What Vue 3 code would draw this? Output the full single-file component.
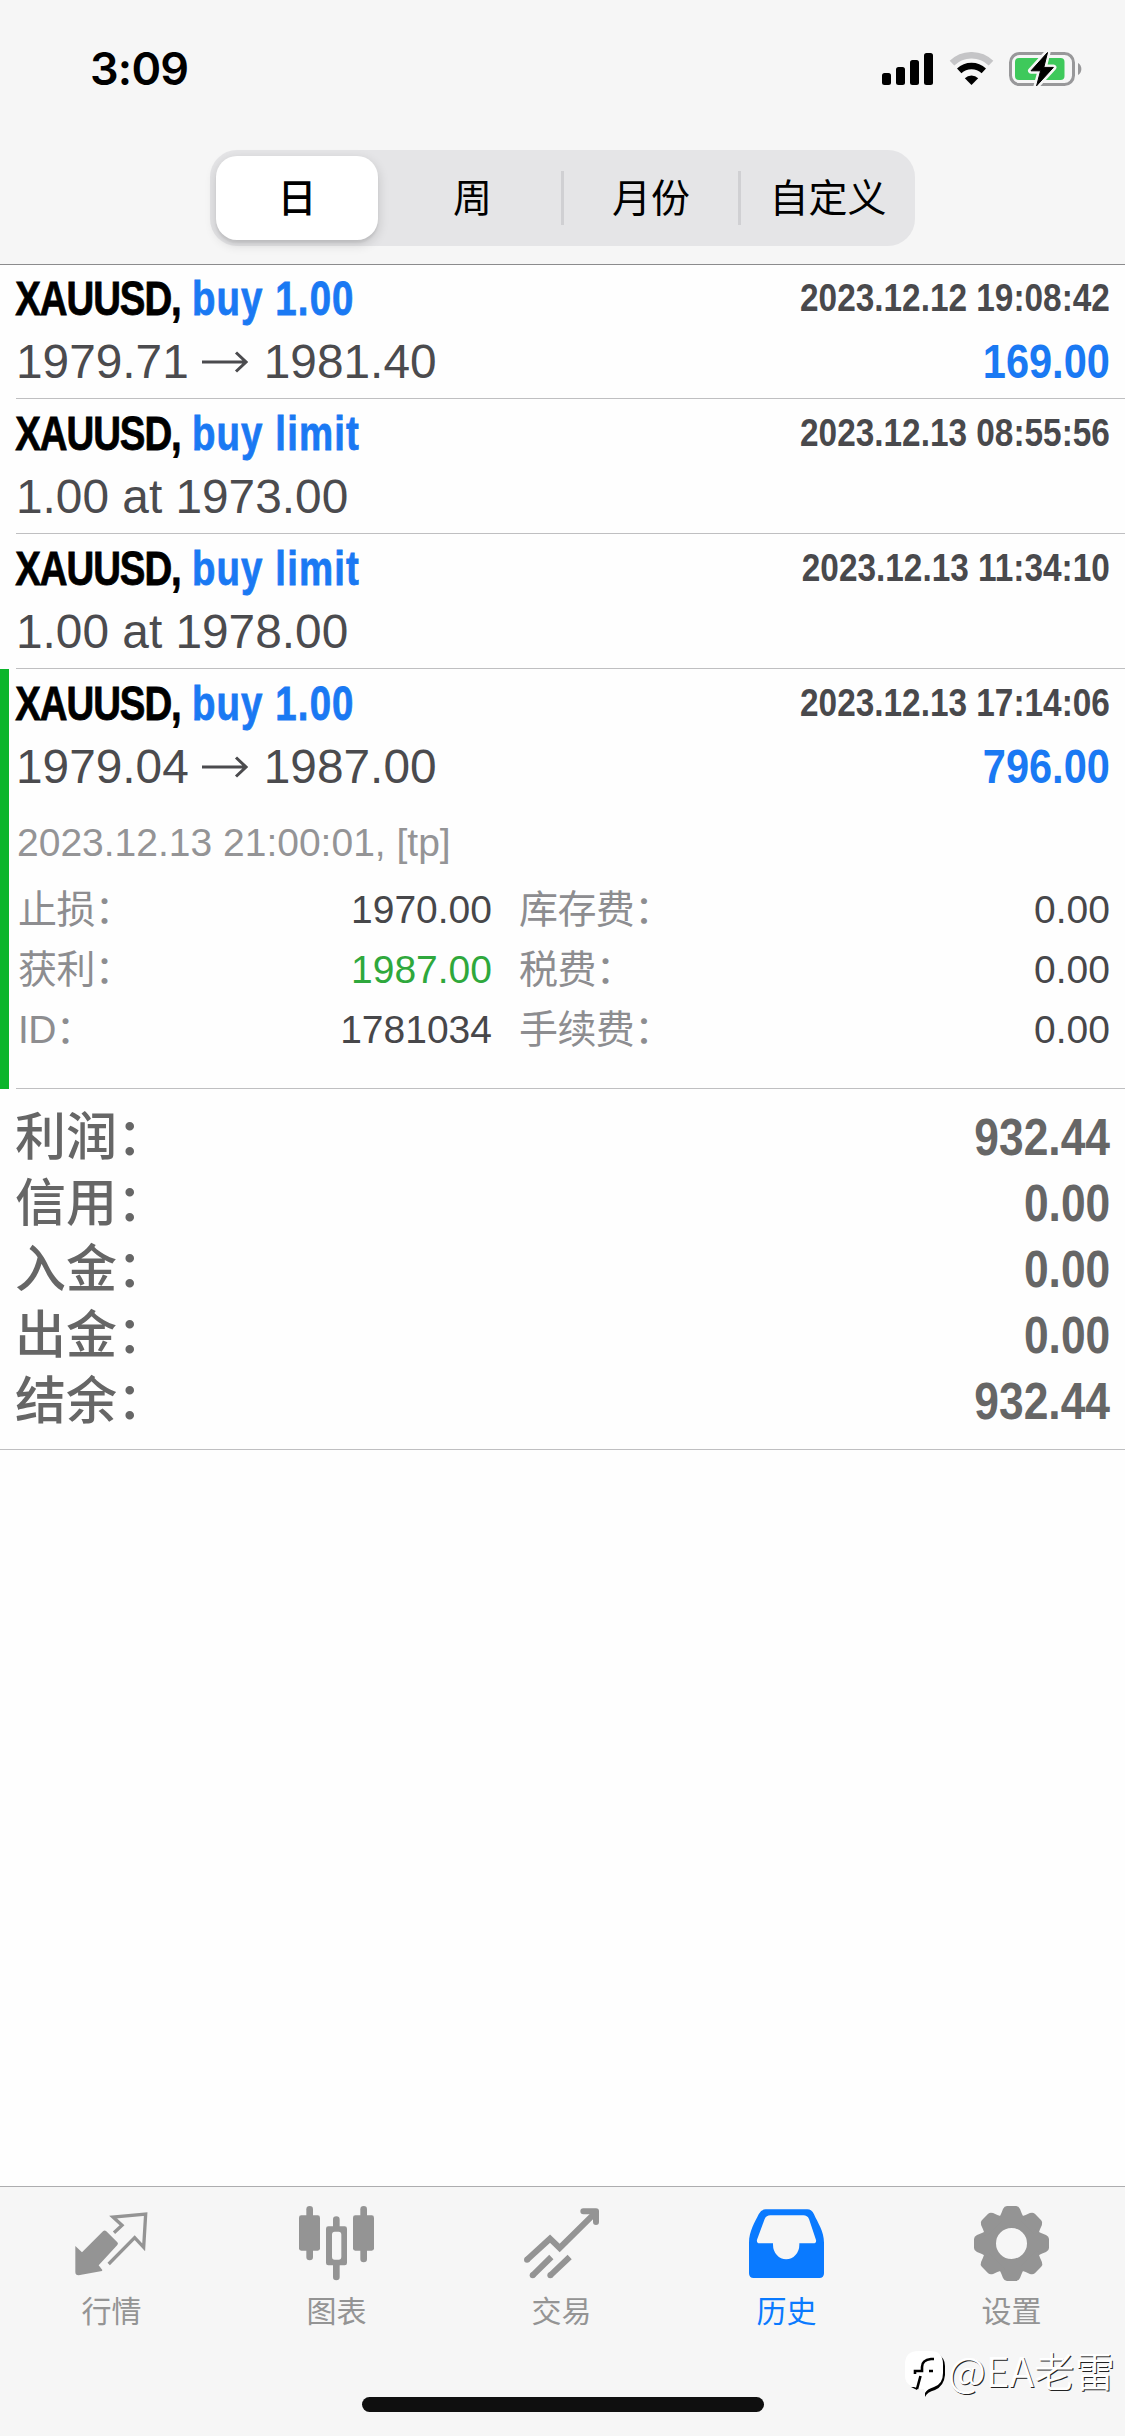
<template>
  <div class="screen">
    <header class="header">
      <div class="status-bar">
        <span class="clock">3:09</span>
        <div class="status-icons">
          <svg class="signal" viewBox="0 0 51 32">
            <rect x="0" y="20" width="9" height="12" rx="2.5" />
            <rect x="14" y="14" width="9" height="18" rx="2.5" />
            <rect x="28" y="7" width="9" height="25" rx="2.5" />
            <rect x="42" y="0" width="9" height="32" rx="2.5" />
          </svg>
          <svg class="wifi" viewBox="0 0 45 34">
            <path d="M3 11.2A28 28 0 0 1 42 11.2" fill="none" stroke="#c5c5c7" stroke-width="6.6" />
            <path d="M10.2 18.8A18 18 0 0 1 34.8 18.8" fill="none" stroke="#000" stroke-width="6.4" />
            <path d="M22.5 33L15.8 26.2A10 10 0 0 1 29.2 26.2Z" />
          </svg>
          <svg class="battery" viewBox="0 0 74 38">
            <rect x="1.5" y="3.5" width="63" height="31" rx="9" fill="none" stroke="#98989a" stroke-width="3" />
            <path d="M69 13A7 7 0 0 1 69 25Z" fill="#98989a" />
            <rect x="6" y="8" width="49.5" height="22" rx="4" fill="#3ec95b" />
            <path
              d="M38.5 2.5L22 20.8H31.6L27.6 35.8L44.4 17.4H34.8Z"
              stroke="#f6f6f6"
              stroke-width="6"
              stroke-linejoin="round"
            />
            <path d="M38.5 2.5L22 20.8H31.6L27.6 35.8L44.4 17.4H34.8Z" stroke="#000" stroke-linejoin="round" />
          </svg>
        </div>
      </div>

      <div class="segments">
        <button
          v-for="(p, i) in periods"
          :key="p"
          class="segment"
          :class="{ active: period === i, divided: i > 1 }"
          @click="period = i"
        >
          <span class="segment-text">{{ p }}</span>
        </button>
      </div>
    </header>

    <main class="content">
      <div v-for="d in deals" :key="d.time" class="deal" :class="{ open: d.details }">
        <div class="deal-body">
          <div class="line">
            <div class="title">
              <span class="symbol">{{ d.symbol }},</span>
              <span class="action">{{ d.action }}</span>
            </div>
            <span class="time">{{ d.time }}</span>
          </div>
          <div class="line">
            <div class="price">
              <template v-if="d.to">
                <span>{{ d.from }}</span>
                <svg class="arrow" viewBox="0 0 46 22">
                  <path d="M0 11H44M34 1.5L44 11L34 20.5" />
                </svg>
                <span>{{ d.to }}</span>
              </template>
              <span v-else>{{ d.from }}</span>
            </div>
            <span v-if="d.profit" class="profit">{{ d.profit }}</span>
          </div>

          <template v-if="d.details">
            <p class="comment">{{ d.comment }}</p>
            <div class="details">
              <div v-for="row in d.details" :key="row.label" class="detail">
                <span class="detail-label">{{ row.label }}：</span>
                <span class="detail-value" :class="{ hit: row.hit }">{{ row.value }}</span>
              </div>
            </div>
          </template>
        </div>
      </div>

      <div class="summary">
        <div v-for="s in summary" :key="s.label" class="summary-row">
          <span>{{ s.label }}：</span>
          <span class="summary-value">{{ s.value }}</span>
        </div>
      </div>
    </main>

    <nav class="tab-bar">
      <div class="tabs">
        <button
          v-for="t in tabs"
          :key="t.id"
          class="tab"
          :class="{ active: tab === t.id }"
          @click="tab = t.id"
        >
          <svg class="tab-icon" viewBox="0 0 225 225">
            <g v-if="t.id === 'quotes'">
              <path
                d="M4 120L24 139L87 76Q92 71 97 76L130 109Q134 113 130 117L74 178L85 192L84 195L14 208Q4 208 4 198Z"
                fill="currentColor"
              />
              <path
                d="M120 80L144 58L117 33L215 24L209 124L182 95L104 174"
                fill="none"
                stroke="currentColor"
                stroke-width="10"
              />
            </g>
            <g v-else-if="t.id === 'charts'" fill="currentColor">
              <rect x="22" y="0" width="20" height="163" rx="10" />
              <rect x="0" y="28" width="63" height="106" rx="7" />
              <rect x="184" y="0" width="20" height="169" rx="10" />
              <rect x="162" y="28" width="63" height="106" rx="7" />
              <rect x="102" y="31" width="20" height="40" rx="10" />
              <rect x="102" y="168" width="20" height="55" rx="10" />
              <path
                fill-rule="evenodd"
                d="M88 61H137Q144 61 144 68V171Q144 178 137 178H88Q81 178 81 171V68Q81 61 88 61ZM107 77Q99 77 99 86V152Q99 161 107 161H119Q127 161 127 152V86Q127 77 119 77Z"
              />
            </g>
            <g v-else-if="t.id === 'trade'" fill="none" stroke="currentColor" stroke-width="18">
              <path d="M9 161L78 98L107 126L212 22" />
              <path d="M178 16H216V48" stroke-linecap="round" stroke-linejoin="round" />
              <path d="M26 208L82 153M79 208L137 153" />
              <g fill="currentColor" stroke="none">
                <circle cx="9" cy="161" r="9" />
                <circle cx="26" cy="208" r="9" />
                <circle cx="79" cy="208" r="9" />
              </g>
            </g>
            <path
              v-else-if="t.id === 'history'"
              fill="currentColor"
              fill-rule="evenodd"
              d="M0 110C0 76 18 48 29 25Q37 10 50 10H175Q188 10 195 25C206 50 225 76 225 110V202Q225 216 211 216H14Q0 216 0 202ZM64 28Q52 28 47 39L24 101Q22 112 32 112H72V116A39.5 44 0 0 0 151 116V112H193Q203 112 201 102L180 39Q175 28 163 28Z"
            />
            <g v-else>
              <circle cx="112.5" cy="112.5" r="68" fill="none" stroke="currentColor" stroke-width="43" />
              <path
                v-for="n in 8"
                :key="n"
                fill="currentColor"
                :transform="`rotate(${n * 45} 112.5 112.5)`"
                d="M70 45Q78 32 82 22L87 9Q91 0 99 0H126Q134 0 138 9L143 22Q147 32 155 45Z"
              />
            </g>
          </svg>
          <span class="tab-label">{{ t.label }}</span>
        </button>
      </div>
      <div class="home-indicator"></div>
    </nav>

    <div class="watermark">
      <svg class="watermark-logo" viewBox="0 0 40 46">
        <path d="M33 3Q40 7 40 15V24Q39 35 30 39Q22 41 20 46V40L33 30Z" fill="#000" />
        <path d="M6 36L12 39L13 36Z" fill="#000" />
        <path
          d="M14 0H25Q38 0 38 13V22Q38 33 29 36Q22 38 20 42L19 38H13L12 37L6 35Q0 32 0 25V13Q0 0 14 0Z"
          fill="#fff"
        />
        <path d="M29 8H26Q17 9 17 16V20H10V23" fill="none" stroke="#000" stroke-width="2.6" />
        <path d="M15.5 25L12 38M24 20H28" fill="none" stroke="#000" stroke-width="2.6" />
      </svg>
      <span>@EA老雷</span>
    </div>
  </div>
</template>

<script setup>
import { ref } from "vue";

const periods = ["日", "周", "月份", "自定义"];
const period = ref(0);

const deals = [
  {
    symbol: "XAUUSD",
    action: "buy 1.00",
    time: "2023.12.12 19:08:42",
    from: "1979.71",
    to: "1981.40",
    profit: "169.00"
  },
  {
    symbol: "XAUUSD",
    action: "buy limit",
    time: "2023.12.13 08:55:56",
    from: "1.00 at 1973.00"
  },
  {
    symbol: "XAUUSD",
    action: "buy limit",
    time: "2023.12.13 11:34:10",
    from: "1.00 at 1978.00"
  },
  {
    symbol: "XAUUSD",
    action: "buy 1.00",
    time: "2023.12.13 17:14:06",
    from: "1979.04",
    to: "1987.00",
    profit: "796.00",
    comment: "2023.12.13 21:00:01, [tp]",
    details: [
      { label: "止损", value: "1970.00" },
      { label: "库存费", value: "0.00" },
      { label: "获利", value: "1987.00", hit: true },
      { label: "税费", value: "0.00" },
      { label: "ID", value: "1781034" },
      { label: "手续费", value: "0.00" }
    ]
  }
];

const summary = [
  { label: "利润", value: "932.44" },
  { label: "信用", value: "0.00" },
  { label: "入金", value: "0.00" },
  { label: "出金", value: "0.00" },
  { label: "结余", value: "932.44" }
];

const tabs = [
  { id: "quotes", label: "行情" },
  { id: "charts", label: "图表" },
  { id: "trade", label: "交易" },
  { id: "history", label: "历史" },
  { id: "settings", label: "设置" }
];
const tab = ref("history");
</script>

<style>
body {
  margin: 0;
  background: #fefefe;
}
</style>

<style scoped>
.screen {
  position: relative;
  display: flex;
  flex-direction: column;
  width: 1125px;
  height: 2436px;
  overflow: hidden;
  background: #fefefe;
  font-family: "Liberation Sans", "Noto Sans CJK SC", sans-serif;
}

button {
  padding: 0;
  border: none;
  background: none;
  font-family: inherit;
  cursor: pointer;
}

/* Header */
.header {
  box-sizing: border-box;
  height: 265px;
  flex-shrink: 0;
  background: #f6f6f6;
  border-bottom: 1px solid #8b8b8d;
}

.status-bar {
  display: flex;
  justify-content: space-between;
  align-items: center;
  height: 138px;
  padding: 0 42px 0 90px;
}

.clock {
  font-family: Inter, sans-serif;
  font-size: 45px;
  font-weight: 600;
  line-height: 138px;
  letter-spacing: -0.8px;
}

.status-icons {
  display: flex;
  align-items: center;
}

.signal {
  width: 51px;
  height: 32px;
}

.wifi {
  width: 45px;
  height: 34px;
  margin-left: 16px;
}

.battery {
  width: 74px;
  height: 38px;
  margin-left: 15px;
}

.segments {
  display: grid;
  grid-template-columns: 174px 177px 177px 177px;
  width: 705px;
  height: 96px;
  margin: 12px 0 0 210px;
  border-radius: 27px;
  background: #e5e5e7;
}

.segment {
  display: flex;
  align-items: center;
  justify-content: center;
  font-size: 39px;
  color: #000;
}

.segment.divided::before {
  content: "";
  width: 3px;
  height: 54px;
  margin-right: -3px;
  background: #d0d0d3;
}

.segment-text {
  flex: 1;
  padding-top: 2px;
  line-height: 82px;
}

.segment.divided .segment-text {
  padding-left: 3px;
}

.segment.active .segment-text {
  flex: none;
  width: 162px;
  border-radius: 21px;
  background: #fff;
  font-weight: 500;
  box-shadow: 0 4px 12px rgba(0, 0, 0, 0.16), 0 3px 2px rgba(0, 0, 0, 0.06);
}

/* Deals */
.content {
  flex: 1;
  margin-top: -1px;
}

.deal {
  padding-left: 16px;
}

.deal.open {
  padding-left: 7px;
  border-left: 9px solid #0cb52c;
}

.deal-body {
  padding: 3px 15px 5px 0;
  border-bottom: 1px solid #bfbfc1;
}

.deal.open .deal-body {
  padding-bottom: 29px;
}

/* the first row starts under the header line */
.deal:first-child {
  border-top: 1px solid #8b8b8d;
}

.deal:first-child .deal-body {
  padding-top: 2px;
}

.line {
  display: flex;
  justify-content: space-between;
  height: 63px;
  line-height: 63px;
  white-space: nowrap;
}

/* Condensed bold numerals and titles */
.title,
.time,
.profit,
.summary-value {
  font-weight: bold;
}

.title {
  display: flex;
  font-size: 48px;
  transform: scaleX(0.8);
  transform-origin: left;
  -webkit-text-stroke: 0.8px currentColor;
}

.symbol {
  margin-left: -1px;
  color: #000;
  letter-spacing: -1.3px;
}

.action {
  margin-left: 14px;
  color: #1a79f3;
  letter-spacing: 1.4px;
}

.time {
  font-size: 38px;
  color: #49494c;
  transform: scaleX(0.878);
  transform-origin: right;
}

.price {
  display: flex;
  align-items: center;
  font-size: 47.8px;
  color: #4b4b4e;
}

.arrow {
  width: 46px;
  height: 22px;
  margin: 0 16px 0 13px;
  fill: none;
  stroke: currentColor;
  stroke-width: 3;
}

.profit {
  font-size: 48px;
  color: #1a79f3;
  transform: scaleX(0.865);
  transform-origin: right;
}

.comment {
  margin: 15px 0 7px 1px;
  font-size: 39px;
  line-height: 60px;
  color: #949496;
}

.details {
  display: grid;
  grid-template-columns: 474px 591px;
  column-gap: 27px;
  margin-left: 2px;
  margin-bottom: -1px;
}

.detail {
  display: flex;
  justify-content: space-between;
  font-size: 39px;
  line-height: 60px;
}

.detail-label {
  color: #8d8d90;
  letter-spacing: -0.6px;
}

.detail-value {
  color: #47474a;
}

.detail-value.hit {
  color: #2fa83c;
}

/* Summary */
.summary {
  padding: 16px 15px 14px;
  border-bottom: 1px solid #bfbfc1;
}

.summary-row {
  display: flex;
  justify-content: space-between;
  font-size: 51px;
  font-weight: 500;
  line-height: 66px;
  color: #666;
}

.summary-value {
  transform: scaleX(0.87);
  transform-origin: right;
}

/* Tab bar */
.tab-bar {
  box-sizing: border-box;
  height: 250px;
  flex-shrink: 0;
  border-top: 1px solid #adadaf;
  background: #f6f6f6;
}

.tabs {
  display: grid;
  grid-template-columns: repeat(5, 225px);
  height: 210px;
  margin-left: -1px;
}

.tab {
  display: flex;
  flex-direction: column;
  align-items: center;
  padding-top: 19px;
  color: #949494;
}

.tab.active {
  color: #0a7aff;
}

.tab-icon {
  width: 75px;
  height: 75px;
}

.tab-label {
  margin-top: 11px;
  font-size: 30px;
  line-height: 40px;
}

.home-indicator {
  width: 402px;
  height: 15px;
  margin: 0 auto;
  border-radius: 8px;
  background: #0f0f0f;
}

.watermark {
  position: absolute;
  left: 905px;
  top: 2343px;
  display: flex;
  align-items: center;
  font-family: "Noto Sans CJK SC", sans-serif;
  font-size: 40.5px;
  font-weight: 350;
  line-height: 54px;
  color: #fff;
  text-shadow: 1px 1px 0 #222;
  white-space: nowrap;
}

.watermark-logo {
  width: 40px;
  height: 46px;
  margin: 7px 3px 0 0;
}
</style>
